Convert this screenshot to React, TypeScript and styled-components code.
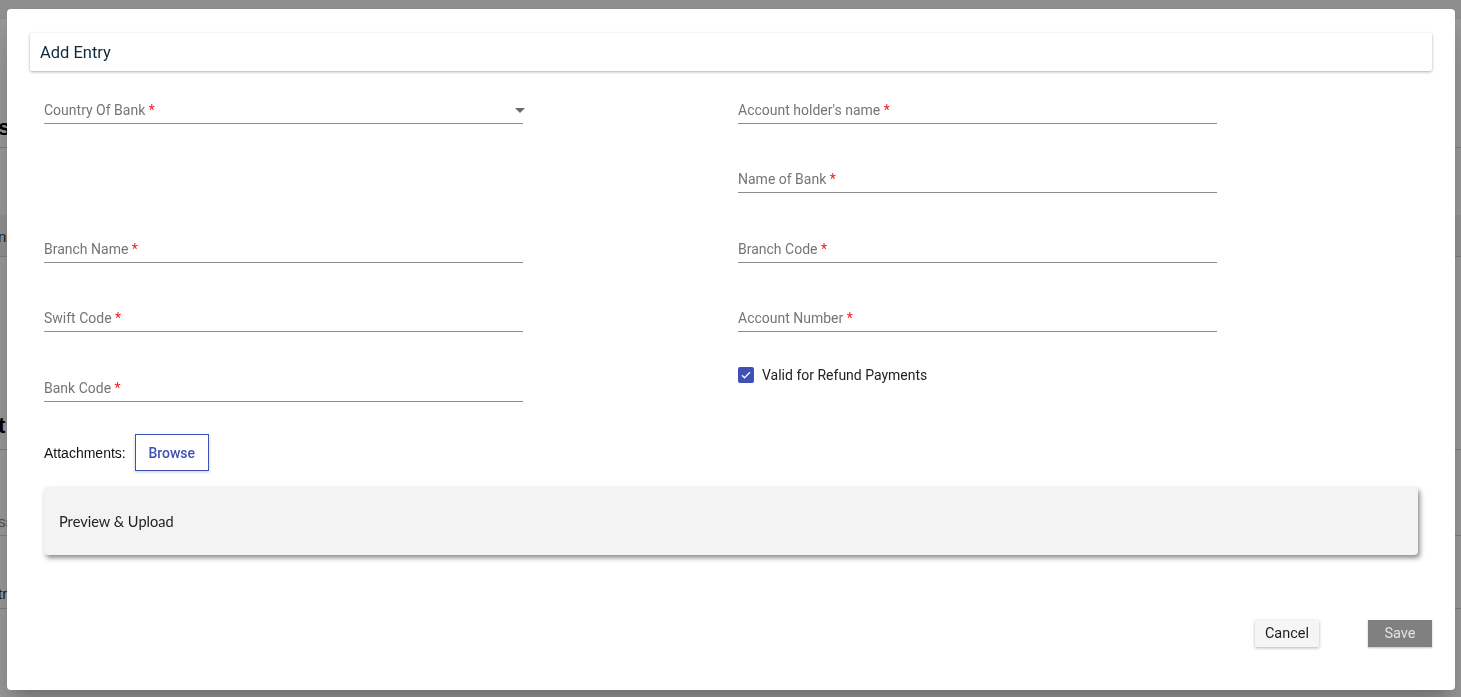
import React from "react";
import styled, { createGlobalStyle } from "styled-components";

const GlobalStyle = createGlobalStyle`
  html, body {
    margin: 0;
    padding: 0;
    background: #ffffff;
    font-family: Roboto, "Liberation Sans", Arial, sans-serif;
  }
  * {
    box-sizing: border-box;
  }
`;

const leftFields = [
  { label: "Country Of Bank", select: true },
  null,
  { label: "Branch Name" },
  { label: "Swift Code" },
  { label: "Bank Code" },
];

const rightFields = [
  { label: "Account holder's name" },
  { label: "Name of Bank" },
  { label: "Branch Code" },
  { label: "Account Number" },
];

function App() {
  return (
    <>
      <GlobalStyle />
      <Page>
        <PageTop />
        <PageRow $height={129} $pad={6} $border>
          <PageHeading>s</PageHeading>
        </PageRow>
        <PageRow $height={67} />
        <PageRow $height={42} $pad={11} $border $shade>
          <PageText>nl</PageText>
        </PageRow>
        <PageRow $height={150} />
        <PageRow $height={43} $pad={10} $border>
          <PageHeading>t</PageHeading>
        </PageRow>
        <PageRow $height={86} $pad={5} $border>
          <PageText $muted>ss</PageText>
        </PageRow>
        <PageRow $height={73} $pad={6} $border>
          <PageText>tr</PageText>
        </PageRow>
      </Page>

      <Overlay>
        <Modal>
          <HeaderCard>Add Entry</HeaderCard>
          <Body>
            <FieldGrid>
              <Column>
                {leftFields.map((f, i) =>
                  f ? (
                    <Field key={i}>
                      <Label>
                        {f.label} <Req>*</Req>
                      </Label>
                      {f.select && <Caret />}
                    </Field>
                  ) : (
                    <EmptyCell key={i} />
                  )
                )}
              </Column>
              <Column>
                {rightFields.map((f, i) => (
                  <Field key={i}>
                    <Label>
                      {f.label} <Req>*</Req>
                    </Label>
                  </Field>
                ))}
                <CheckRow>
                  <CheckBox>
                    <svg width="12" height="12" viewBox="0 0 24 24">
                      <path
                        d="M4 12.5l5 5L20 6.5"
                        fill="none"
                        stroke="#ffffff"
                        strokeWidth="2.6"
                      />
                    </svg>
                  </CheckBox>
                  <CheckLabel>Valid for Refund Payments</CheckLabel>
                </CheckRow>
              </Column>
            </FieldGrid>

            <AttachRow>
              <AttachLabel>Attachments:</AttachLabel>
              <BrowseButton>Browse</BrowseButton>
            </AttachRow>

            <PreviewBox>Preview &amp; Upload</PreviewBox>
          </Body>

          <Footer>
            <ActionButton $variant="plain">Cancel</ActionButton>
            <ActionButton $variant="disabled">Save</ActionButton>
          </Footer>
        </Modal>
      </Overlay>
    </>
  );
}

export default App;

const Page = styled.div`
  width: 100%;
  height: 100vh;
  overflow: hidden;
  background: #ffffff;
`;

const PageTop = styled.div`
  height: 19px;
  background: #ececec;
`;

const PageRow = styled.div<{
  $height?: number;
  $pad?: number;
  $border?: boolean;
  $shade?: boolean;
}>`
  height: ${(p) => p.$height ?? 40}px;
  display: flex;
  align-items: flex-end;
  padding-bottom: ${(p) => p.$pad ?? 8}px;
  border-bottom: ${(p) => (p.$border ? "1px solid #d6d6d6" : "none")};
  background: ${(p) => (p.$shade ? "#f2f2f2" : "transparent")};
`;

const PageHeading = styled.div`
  font-family: "Liberation Sans", Arial, sans-serif;
  font-weight: bold;
  font-size: 22px;
  color: #000;
  margin-left: -2px;
`;

const PageText = styled.div<{ $muted?: boolean }>`
  font-family: "Liberation Sans", Arial, sans-serif;
  font-size: 15px;
  color: ${(p) => (p.$muted ? "#888" : "#333")};
  margin-left: -2px;
`;

const Overlay = styled.div`
  position: fixed;
  inset: 0;
  background: rgba(0, 0, 0, 0.4);
  display: flex;
  padding: 9px 6px 7px 7px;
`;

const Modal = styled.div`
  flex: 1;
  background: #ffffff;
  border-radius: 4px;
  box-shadow: 0 11px 15px -7px rgba(0, 0, 0, 0.2),
    0 24px 38px 3px rgba(0, 0, 0, 0.14);
  padding: 24px 23px 0 23px;
  display: flex;
  flex-direction: column;
`;

const HeaderCard = styled.div`
  height: 38px;
  display: flex;
  align-items: center;
  padding: 0 10px;
  font-size: 16.5px;
  color: #10293a;
  background: #fff;
  box-shadow: 0 1px 3px rgba(0, 0, 0, 0.32);
  border-radius: 2px;
`;

const Body = styled.div`
  padding: 13px 14px 0 14px;
`;

const FieldGrid = styled.div`
  display: grid;
  grid-template-columns: 479px 479px;
  column-gap: 215px;
`;

const Column = styled.div`
  display: grid;
  grid-template-rows: 40px 40px 41px 40px 41px;
  row-gap: 29px;
`;

const Field = styled.div`
  position: relative;
  height: 40px;
  align-self: end;
  display: flex;
  align-items: flex-end;
  padding-bottom: 3px;
  border-bottom: 1px solid #8d8d8d;
`;

const EmptyCell = styled.div``;

const Label = styled.span`
  font-size: 14px;
  line-height: 20px;
  color: #757575;
`;

const Req = styled.span`
  color: #f01e1e;
`;

const Caret = styled.span`
  position: absolute;
  right: -2px;
  bottom: 10px;
  width: 0;
  height: 0;
  border-left: 5px solid transparent;
  border-right: 5px solid transparent;
  border-top: 5px solid #6b6b6b;
`;

const CheckRow = styled.div`
  display: flex;
  align-items: flex-start;
  gap: 8px;
  padding-top: 6px;
`;

const CheckBox = styled.span`
  width: 16px;
  height: 16px;
  border-radius: 2px;
  background: #3f51b5;
  display: flex;
  align-items: center;
  justify-content: center;
`;

const CheckLabel = styled.span`
  font-size: 14px;
  line-height: 16px;
  color: #222;
`;

const AttachRow = styled.div`
  display: flex;
  align-items: center;
  gap: 9px;
  margin-top: 32px;
`;

const AttachLabel = styled.span`
  font-family: "Liberation Sans", Arial, sans-serif;
  font-size: 14px;
  color: #111;
`;

const BrowseButton = styled.button`
  width: 74px;
  height: 37px;
  border: 1px solid #3f51b5;
  background: #fff;
  color: #3f51b5;
  font-family: Roboto, sans-serif;
  font-weight: 500;
  font-size: 14px;
  border-radius: 0;
  box-shadow: 0 1px 3px rgba(0, 0, 0, 0.2);
  padding: 0;
`;

const PreviewBox = styled.div`
  margin-top: 16px;
  width: 1374px;
  height: 68px;
  background: #f3f3f3;
  border-radius: 4px;
  box-shadow: 2px 3px 5px rgba(0, 0, 0, 0.45);
  display: flex;
  align-items: center;
  padding-left: 15px;
  font-family: Lato, sans-serif;
  font-size: 14.6px;
  color: #222;
`;

const Footer = styled.div`
  display: flex;
  justify-content: flex-end;
  gap: 49px;
  margin-top: 65px;
`;

const ActionButton = styled.button<{ $variant: "plain" | "disabled" }>`
  width: 64px;
  height: 27px;
  border: none;
  border-radius: 0;
  font-family: Roboto, sans-serif;
  font-size: 14.5px;
  padding: 0;
  background: ${(p) => (p.$variant === "plain" ? "#f5f5f5" : "#808080")};
  color: ${(p) => (p.$variant === "plain" ? "#1e1e1e" : "#e2e2e2")};
  box-shadow: ${(p) =>
    p.$variant === "plain"
      ? "0 1px 3px rgba(0, 0, 0, 0.3)"
      : "0 1px 2px rgba(0, 0, 0, 0.25)"};
`;
